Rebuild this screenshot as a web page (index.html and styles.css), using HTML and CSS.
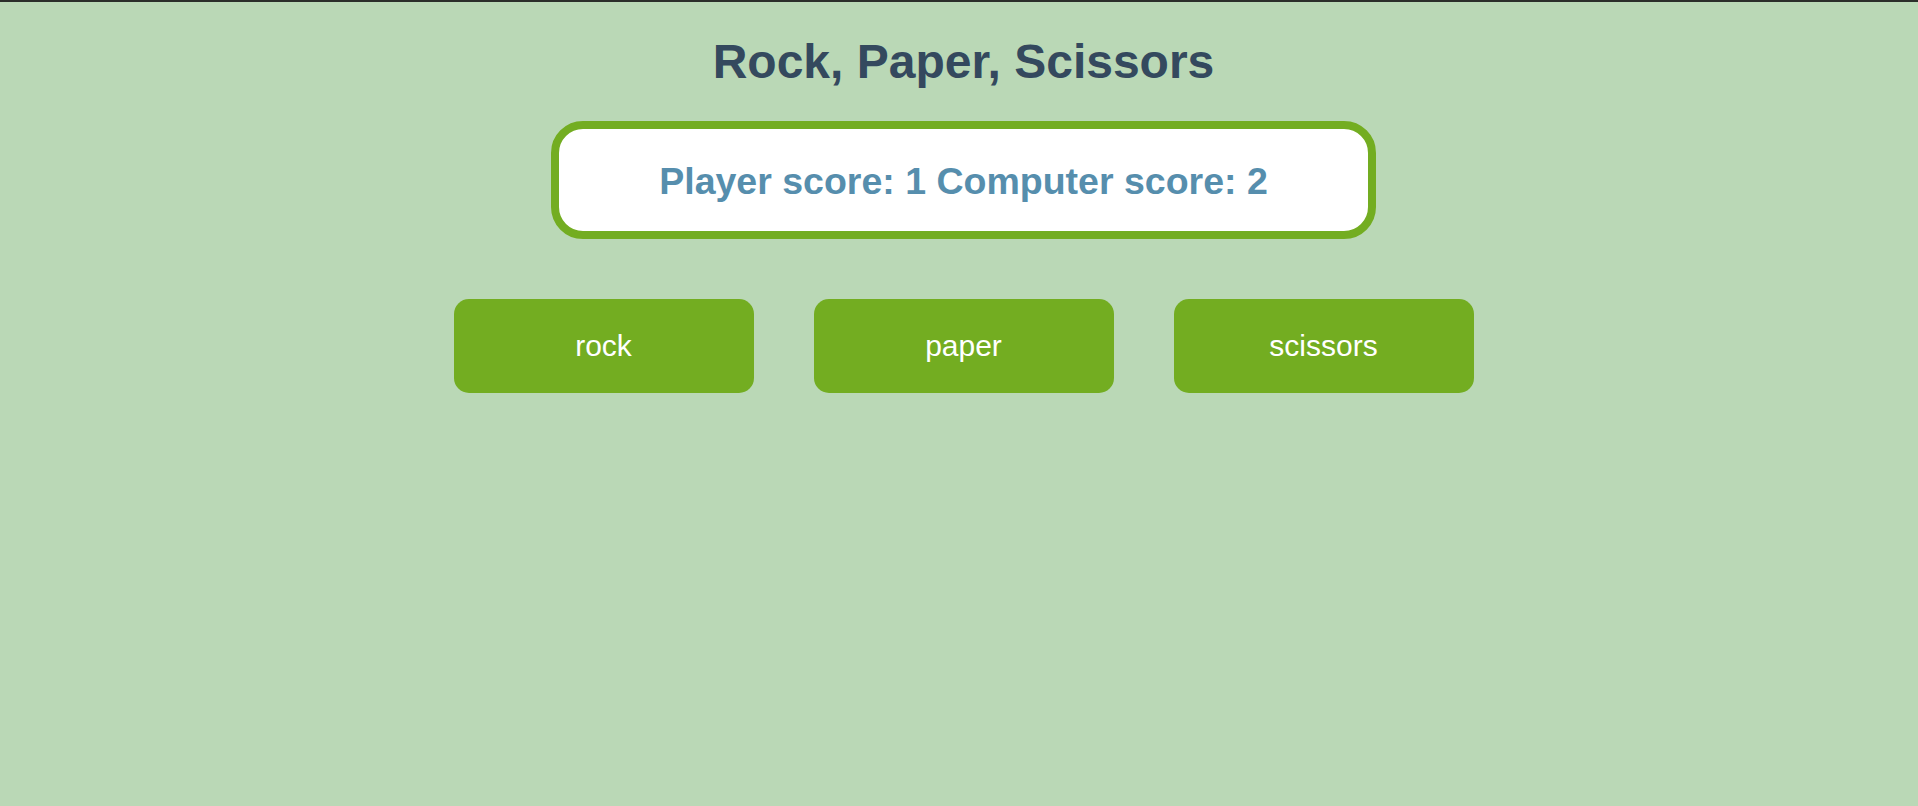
FILE: index.html
```html
<!DOCTYPE html>
<html lang="en">
<head>
<meta charset="utf-8">
<title>Rock, Paper, Scissors</title>
<link rel="stylesheet" href="styles.css">
</head>
<body>
  <main class="game">
    <h1 class="title">Rock, Paper, Scissors</h1>
    <div class="scoreboard">
      <h2 class="score">Player score: 1 Computer score: 2</h2>
    </div>
    <div class="choices">
      <button class="choice">rock</button>
      <button class="choice">paper</button>
      <button class="choice">scissors</button>
    </div>
  </main>
</body>
</html>
```
FILE: styles.css
```css
html, body {
  height: 100%;
}

body {
  margin: 0;
  border-top: 2px solid #2b2e2a;
  background: #bad8b6;
  font-family: "Liberation Sans", Arial, sans-serif;
  box-sizing: border-box;
}

.game {
  display: flex;
  flex-direction: column;
  align-items: center;
  padding-left: 9px;
}

.title {
  margin: 32px 0 32px;
  font-size: 48px;
  font-weight: 700;
  line-height: normal;
  color: #34495e;
}

.scoreboard {
  box-sizing: border-box;
  width: 825px;
  border: 8px solid #73ad21;
  border-radius: 32px;
  background: #ffffff;
  padding: 31px 0 28px;
  text-align: center;
}

.score {
  margin: 0;
  font-size: 37.5px;
  font-weight: 700;
  line-height: normal;
  color: #568ead;
}

.choices {
  display: flex;
  gap: 60px;
  margin-top: 60px;
}

.choice {
  width: 300px;
  height: 94px;
  border: none;
  border-radius: 15px;
  background: #73ad21;
  color: #ffffff;
  font-family: "Liberation Sans", Arial, sans-serif;
  font-size: 30px;
  padding: 0;
  cursor: pointer;
}
```
